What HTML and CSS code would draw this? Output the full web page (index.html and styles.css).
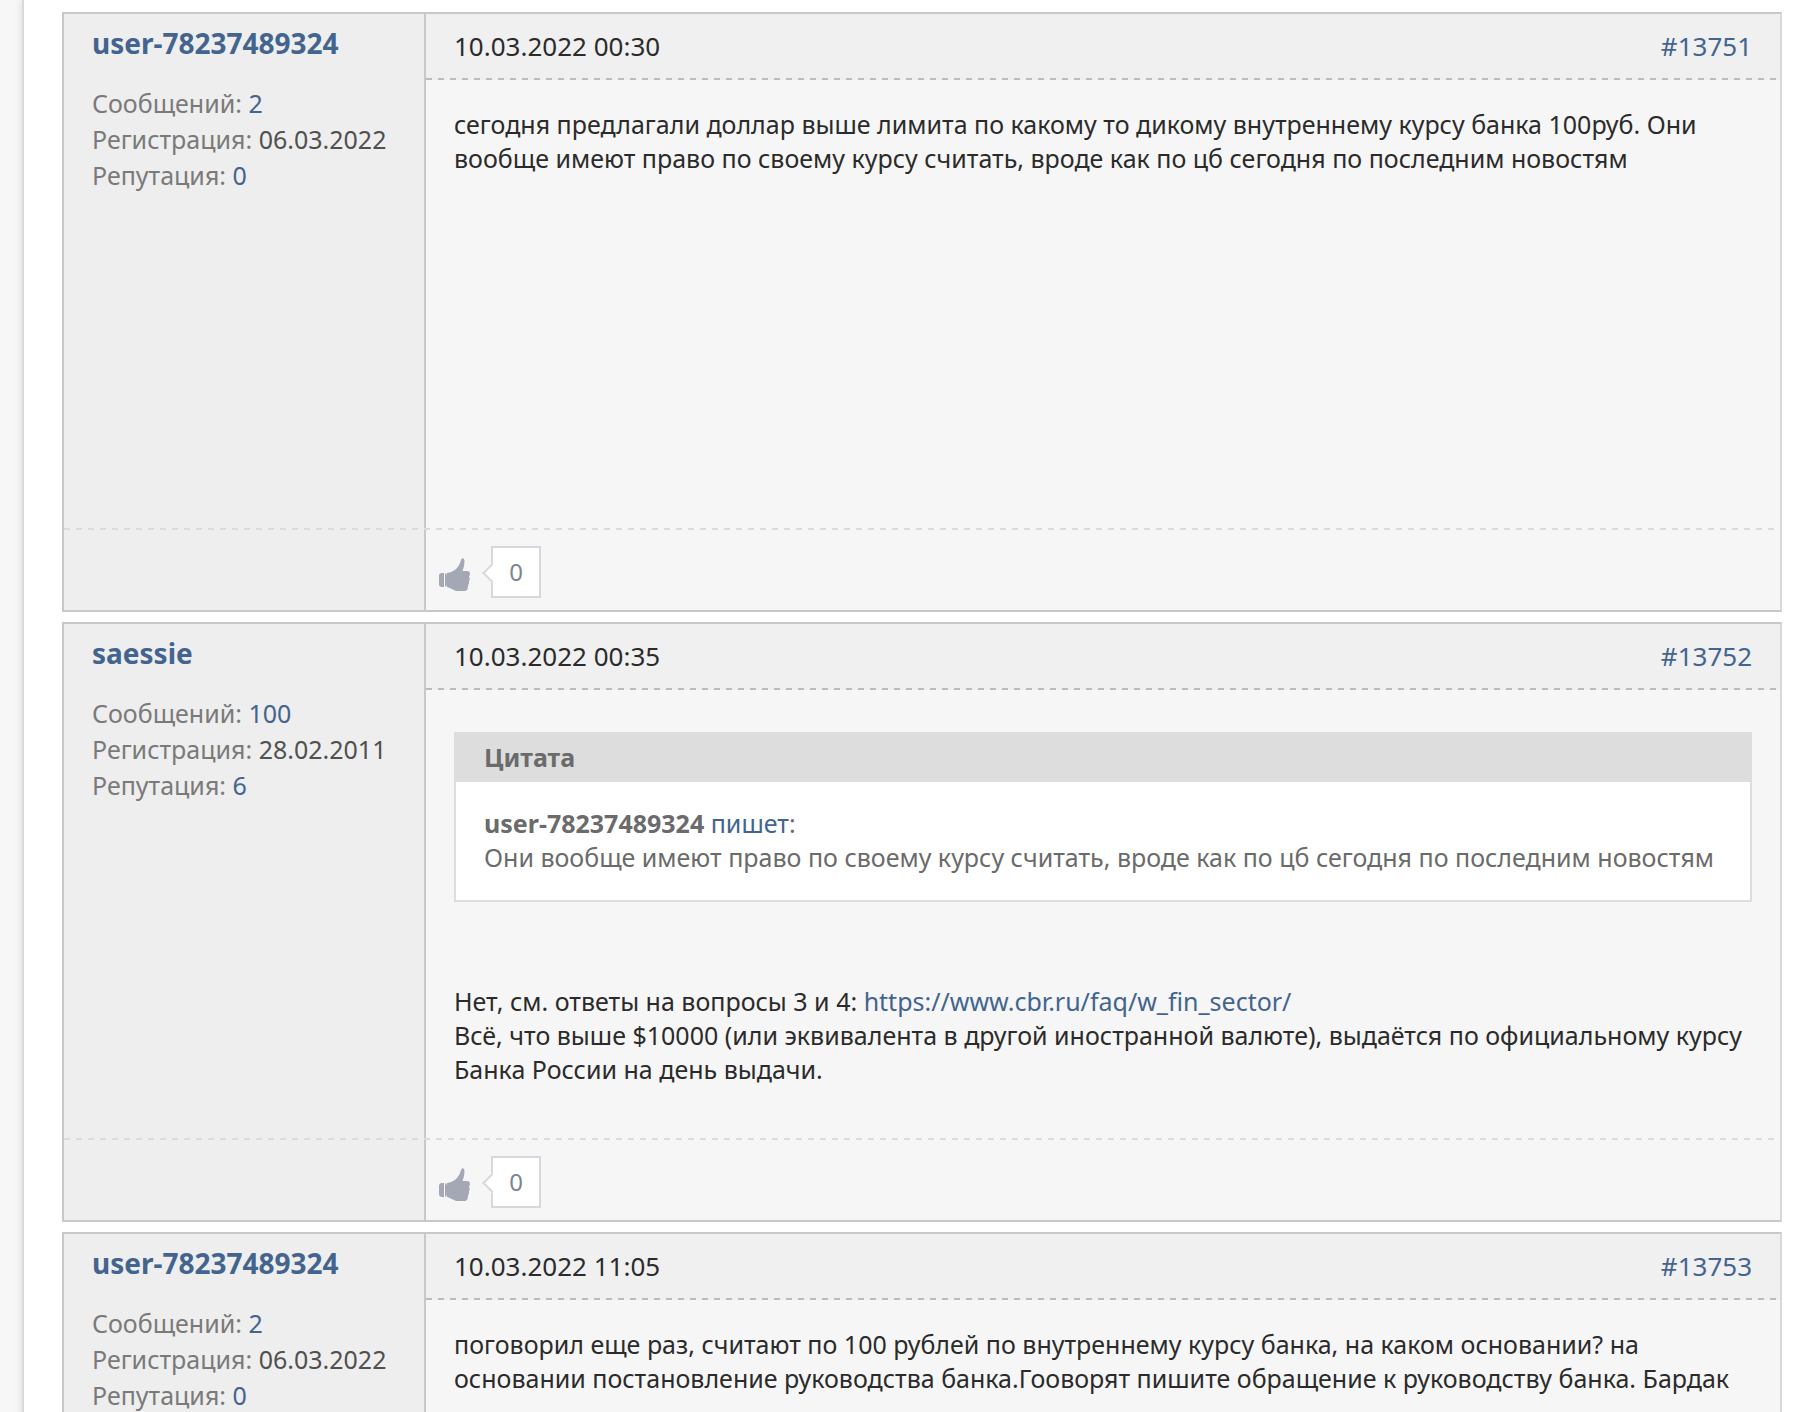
FILE: index.html
```
<!DOCTYPE html>
<html lang="ru">
<head>
    <meta charset="UTF-8">
    <meta name="viewport" content="width=device-width, initial-scale=1.0">
    <title>Форум</title>
    <link rel="stylesheet" href="styles.css">
</head>
<body>
    <svg class="sprite" aria-hidden="true">
        <symbol id="thumb" viewBox="0 0 32 33">
            <path d="M3 15h2v14H3a3 3 0 0 1-3-3v-8a3 3 0 0 1 3-3z"/>
            <path d="M6 15.500h1v13H6z"/>
            <path d="M8 15c7-1 12-5 14-13 1-3 3.500-2 3.500 1 0 4-1 7-2 10H28c2 0 3 1 3 3 0 1-1 2-1 3 1 1 1 3 0 4v2c0 1-1 2-1 3 0 3-1 5-4 5h-8c-3-1-5-3-9-4-2-4-2-10 0-14z"/>
        </symbol>
    </svg>

    <main class="page">
        <article class="post">
            <aside class="user">
                <a href="#" class="user-name">user-78237489324</a>
                <div>Сообщений: <a href="#">2</a></div>
                <div>Регистрация: <span class="user-date">06.03.2022</span></div>
                <div>Репутация: <a href="#">0</a></div>
            </aside>
            <div class="content">
                <header class="post-head">
                    <time>10.03.2022 00:30</time>
                    <a href="#">#13751</a>
                </header>
                <div class="post-text">
                    сегодня предлагали доллар выше лимита по какому то дикому внутреннему курсу банка 100руб. Они вообще имеют право по своему курсу считать, вроде как по цб сегодня по последним новостям
                </div>
            </div>
            <footer class="post-foot">
                <button type="button" class="like" aria-label="Нравится"><svg><use href="#thumb"/></svg></button>
                <span class="count">0</span>
            </footer>
        </article>

        <article class="post">
            <aside class="user">
                <a href="#" class="user-name">saessie</a>
                <div>Сообщений: <a href="#">100</a></div>
                <div>Регистрация: <span class="user-date">28.02.2011</span></div>
                <div>Репутация: <a href="#">6</a></div>
            </aside>
            <div class="content">
                <header class="post-head">
                    <time>10.03.2022 00:35</time>
                    <a href="#">#13752</a>
                </header>
                <div class="post-text">
                    <blockquote class="quote">
                        <div class="quote-head">Цитата</div>
                        <div class="quote-text">
                            <b>user-78237489324</b> <a href="#">пишет</a>:<br>
                            Они вообще имеют право по своему курсу считать, вроде как по цб сегодня по последним новостям
                        </div>
                    </blockquote>
                    Нет, см. ответы на вопросы 3 и 4: <a href="#">https://www.cbr.ru/faq/w_fin_sector/</a><br>
                    Всё, что выше $10000 (или эквивалента в другой иностранной валюте), выдаётся по официальному курсу Банка России на день выдачи.
                </div>
            </div>
            <footer class="post-foot">
                <button type="button" class="like" aria-label="Нравится"><svg><use href="#thumb"/></svg></button>
                <span class="count">0</span>
            </footer>
        </article>

        <article class="post">
            <aside class="user">
                <a href="#" class="user-name">user-78237489324</a>
                <div>Сообщений: <a href="#">2</a></div>
                <div>Регистрация: <span class="user-date">06.03.2022</span></div>
                <div>Репутация: <a href="#">0</a></div>
            </aside>
            <div class="content">
                <header class="post-head">
                    <time>10.03.2022 11:05</time>
                    <a href="#">#13753</a>
                </header>
                <div class="post-text">
                    поговорил еще раз, считают по 100 рублей по внутреннему курсу банка, на каком основании? на основании постановление руководства банка.Гооворят пишите обращение к руководству банка. Бардак
                </div>
            </div>
        </article>
    </main>
</body>
</html>
```
FILE: styles.css
```
* {
    box-sizing: border-box;
}
body {
    margin: 0;
    height: 100vh;
    overflow: hidden;
    background-color: #f7f7f7;
    color: #2b2b2b;
    font-family: "Noto Sans", "Open Sans", sans-serif;
    font-size: 25px;
    line-height: 34px;
}
a {
    color: #42648f;
    text-decoration: none;
}
.sprite {
    display: none;
}
.page {
    display: flex;
    flex-direction: column;
    gap: 10px;
    min-height: 100vh;
    margin-left: 22px;
    padding: 12px 20px 12px 38px;
    border-left: 2px solid #d9d9dd;
    background-color: #fff;
    box-shadow: 0 0 8px rgba(0, 0, 0, 0.12);
}
.post {
    display: grid;
    grid-template-columns: 362px 1fr;
    grid-template-rows: 1fr auto;
    flex-shrink: 0;
    min-height: 600px;
    border: 2px solid #c8c8c9;
    border-right-color: #d8d8da;
    background: linear-gradient(to right, #eee 360px, #c8c8c9 360px, #c8c8c9 362px, #f6f6f6 362px);
}
.user {
    padding: 11px 0 11px 28px;
    color: #7a7a7a;
    line-height: 36px;
}
.user-name {
    display: block;
    margin-bottom: 24px;
    font-size: 28px;
    font-weight: bold;
}
.user-date {
    color: #505050;
}
.post-head {
    display: flex;
    justify-content: space-between;
    padding: 15px 28px 17px;
    background: repeating-linear-gradient(to right, #bbb 0 6px, transparent 6px 12px) bottom / 100% 2px no-repeat #f0f0f0;
    font-size: 26px;
}
.post-text {
    padding: 27px 28px;
}
.quote {
    margin: 15px 0 82px;
    border: 2px solid #ddd;
    background-color: #fff;
    color: #6b6b6b;
}
.quote-head {
    padding: 6px 28px 8px;
    background-color: #ddd;
    font-weight: bold;
}
.quote-text {
    padding: 24px 28px 26px;
}
.post-foot {
    display: flex;
    align-items: center;
    grid-column: 1 / -1;
    gap: 20px;
    height: 82px;
    padding: 6px 0 0 375px;
    background: repeating-linear-gradient(to right, #d9dbe0 0 6px, transparent 6px 12px) top / 100% 2px no-repeat;
}
.like {
    padding: 4px 0 0;
    border: 0;
    background: none;
    cursor: pointer;
}
.like svg {
    display: block;
    width: 32px;
    height: 33px;
    fill: #a3a8b4;
}
.count {
    position: relative;
    width: 50px;
    border: 2px solid #d6d8dd;
    background-color: #fff;
    color: #7d8491;
    font-size: 24px;
    line-height: 48px;
    text-align: center;
}
/* little arrow pointing at the thumb */
.count::before {
    content: "";
    position: absolute;
    top: 18px;
    left: -8px;
    width: 12px;
    height: 12px;
    border: solid #d6d8dd;
    border-width: 0 0 2px 2px;
    background-color: #fff;
    transform: rotate(45deg);
}
```
